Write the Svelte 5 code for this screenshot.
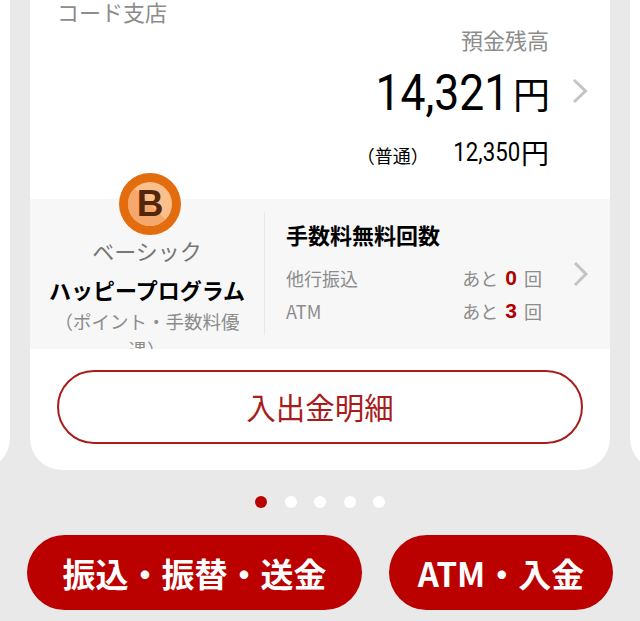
<script>
  const counts = [
    { label: '他行振込', n: 0 },
    { label: 'ATM', n: 3 }
  ];
  const dots = [0, 1, 2, 3, 4];
</script>

<div class="page">
  <div class="carousel">
    <div class="card side"></div>
    <section class="card main">
      <div class="branch">コード支店</div>
      <div class="balance">
        <div class="b-label">預金残高</div>
        <div class="b-row">
          <div class="b-amount"><span class="big">14,321</span><span class="yen">円</span></div>
          <svg class="chev" width="18" height="28" viewBox="0 0 18 28"><path d="M3 3 L14.500 14 L3 25" fill="none" stroke="#c4c4c4" stroke-width="3"/></svg>
        </div>
        <div class="b-sub">
          <span class="kind">（普通）</span>
          <span class="mid-num">12,350</span><span class="yen2">円</span>
        </div>
      </div>

      <div class="panel">
        <div class="rank">
          <div class="badge-wrap">
            <svg class="badge" width="62" height="62" viewBox="0 0 62 62">
              <circle cx="31" cy="31" r="31" fill="#e26c0e"/>
              <circle cx="31" cy="31" r="22" fill="#fbbf8c"/>
              <path d="M15.400 15.400 A22 22 0 0 0 46.600 46.600 Z" fill="#f6a76c"/>
            </svg>
            <span class="badge-b">B</span>
          </div>
          <div class="rank-name">ベーシック</div>
          <div class="prog">ハッピープログラム</div>
          <div class="prog-sub">（ポイント・手数料優遇）</div>
        </div>
        <div class="fees">
          <div class="fee-title">手数料無料回数</div>
          {#each counts as c}
            <div class="fee-row">
              <span class="fee-label">{c.label}</span>
              <span class="fee-val">あと<b>{c.n}</b>回</span>
            </div>
          {/each}
        </div>
        <svg class="chev2" width="18" height="28" viewBox="0 0 18 28"><path d="M3 3 L14 14 L3 25" fill="none" stroke="#c4c4c4" stroke-width="3"/></svg>
      </div>

      <button class="detail">入出金明細</button>
    </section>
    <div class="card side"></div>
  </div>

  <div class="dots">
    {#each dots as d}
      <span class="dot" class:on={d === 0}></span>
    {/each}
  </div>

  <div class="actions">
    <button class="act a1">振込・振替・送金</button>
    <button class="act a2">ATM・入金</button>
  </div>
</div>

<style>
  :global(body) {
    margin: 0;
    background: #e9e9e9;
  }
  .page {
    width: 640px;
    height: 621px;
    overflow: hidden;
    background: #e9e9e9;
    font-family: "Noto Sans CJK JP", "Noto Sans", sans-serif;
  }
  .carousel {
    display: flex;
    justify-content: center;
    gap: 20px;
    height: 470px;
  }
  .card {
    flex: 0 0 580px;
    background: #fff;
    border-radius: 0 0 32px 32px;
    box-sizing: border-box;
  }
  .main {
    display: flex;
    flex-direction: column;
  }
  .branch {
    padding: 0 0 0 27px;
    font-size: 22px;
    line-height: 22px;
    color: #8c8c8c;
    height: 25px;
  }
  .balance {
    display: flex;
    flex-direction: column;
    padding-right: 21px;
    height: 174px;
  }
  .b-label {
    text-align: right;
    font-size: 22px;
    line-height: 28px;
    color: #8c8c8c;
    padding-right: 40px;
  }
  .b-row {
    display: flex;
    justify-content: flex-end;
    align-items: center;
    gap: 21px;
    margin-top: 15px;
  }
  .b-amount {
    display: flex;
    align-items: center;
    color: #000;
  }
  .big {
    font-family: Roboto, sans-serif;
    font-size: 50px;
    line-height: 50px;
    display: inline-block;
    transform: scaleX(0.89);
    transform-origin: right center;
    margin-left: -18px;
    margin-right: 4px;
  }
  .yen {
    font-size: 37px;
    line-height: 50px;
  }
  .chev {
    flex: none;
    margin-bottom: 4px;
  }
  .b-sub {
    display: flex;
    justify-content: flex-end;
    align-items: center;
    padding-right: 40px;
    margin-top: 17px;
    color: #000;
  }
  .kind {
    font-size: 18px;
    line-height: 32px;
    margin-right: 26px;
    position: relative;
    top: 3px;
  }
  .mid-num {
    font-family: Roboto, sans-serif;
    font-size: 25px;
    line-height: 32px;
    display: inline-block;
    transform: scaleX(0.89);
    transform-origin: right center;
    margin-left: -10px;
    margin-right: 1px;
    margin-top: 2px;
  }
  .yen2 {
    font-size: 28px;
    line-height: 32px;
  }
  .panel {
    display: flex;
    height: 150px;
    background: #f7f7f7;
    clip-path: inset(-30px 0 0 0);
    position: relative;
  }
  .rank {
    flex: 0 0 234px;
    min-width: 0;
    margin-top: -26px;
    display: flex;
    flex-direction: column;
    align-items: center;
    padding: 0 23px;
    box-sizing: border-box;
  }
  .badge-wrap {
    position: relative;
    width: 62px;
    height: 62px;
    flex: none;
    margin-left: 6px;
  }
  .badge {
    display: block;
  }
  .badge-b {
    position: absolute;
    inset: 0;
    text-align: center;
    font-family: "Liberation Sans", sans-serif;
    font-weight: 700;
    font-size: 37px;
    line-height: 62px;
    color: #54260a;
  }
  .rank-name {
    font-size: 22px;
    line-height: 30px;
    color: #777;
    margin-top: 0;
  }
  .prog {
    font-size: 22px;
    line-height: 28px;
    font-weight: 700;
    color: #000;
    margin-top: 10px;
    white-space: nowrap;
  }
  .prog-sub {
    font-size: 18.500px;
    line-height: 28px;
    color: #8c8c8c;
    text-align: center;
    margin-top: 4px;
  }
  .fees {
    flex: 1;
    margin-top: 13px;
    height: 123px;
    border-left: 1px solid #e8e8e8;
    padding: 8px 38px 0 21px;
    box-sizing: border-box;
    margin-right: 30px;
  }
  .fee-title {
    font-size: 22px;
    line-height: 28px;
    font-weight: 700;
    color: #000;
    margin-bottom: 13px;
  }
  .fee-row {
    display: flex;
    justify-content: space-between;
    align-items: center;
    height: 33px;
    color: #8c8c8c;
  }
  .fee-label {
    font-size: 18px;
  }
  .fee-val {
    font-size: 18px;
    display: flex;
    align-items: center;
  }
  .fee-val b {
    font-family: "Liberation Sans", sans-serif;
    font-size: 21px;
    font-weight: 700;
    color: #b00000;
    margin: 0 7px;
  }
  .chev2 {
    position: absolute;
    right: 20px;
    top: 61px;
  }
  .detail {
    margin: 21px auto 0;
    width: 526px;
    height: 74px;
    border: 2px solid #a81c1c;
    border-radius: 37px;
    background: #fff;
    color: #a81c1c;
    font-family: inherit;
    font-size: 29.500px;
    padding: 0 0 2px;
  }
  .dots {
    display: flex;
    justify-content: center;
    gap: 17.500px;
    margin-top: 26px;
    height: 12px;
  }
  .dot {
    width: 12px;
    height: 12px;
    border-radius: 50%;
    background: #fff;
  }
  .dot.on {
    background: #bb0000;
  }
  .actions {
    display: flex;
    gap: 27px;
    padding-left: 27px;
    margin-top: 27px;
  }
  .act {
    height: 75px;
    border: 0;
    border-radius: 38px;
    background: #bb0000;
    color: #fff;
    font-family: inherit;
    font-weight: 700;
    font-size: 33px;
    padding: 0;
    white-space: nowrap;
  }
  .a1 {
    width: 335px;
  }
  .a2 {
    width: 224px;
  }
</style>
